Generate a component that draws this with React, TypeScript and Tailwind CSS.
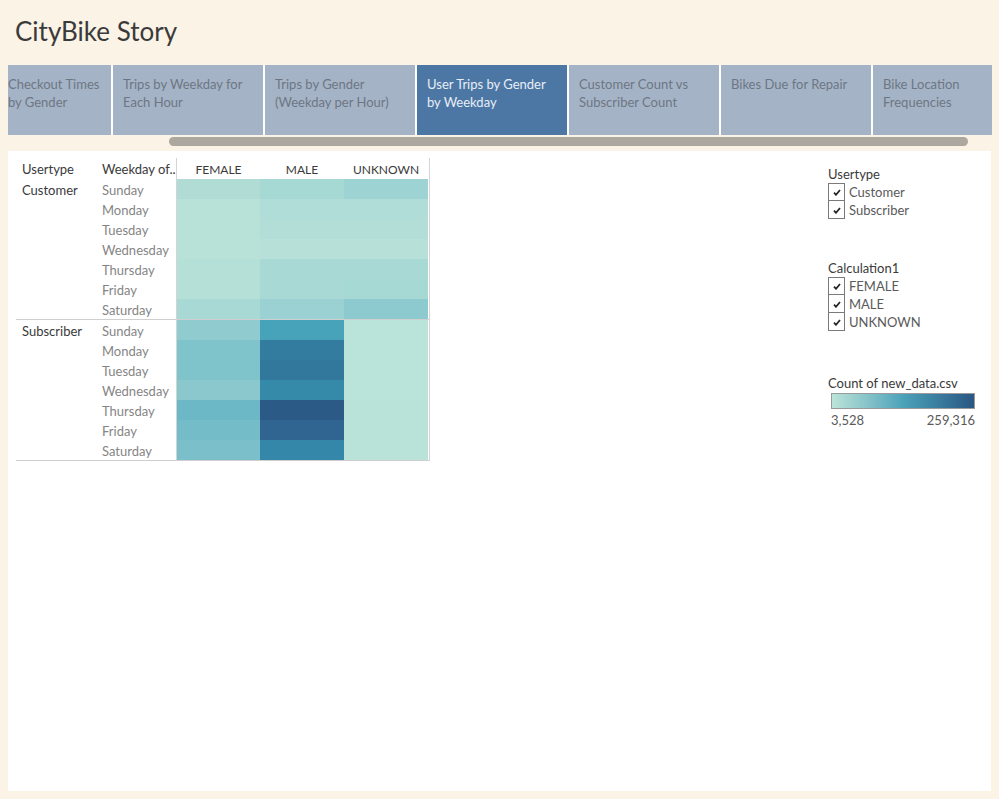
import React from "react";

const tabs = [
  { label: ["Checkout Times", "by Gender"], w: "w-[103px]", first: true },
  { label: ["Trips by Weekday for", "Each Hour"], w: "w-[150px]" },
  { label: ["Trips by Gender", "(Weekday per Hour)"], w: "w-[150px]" },
  { label: ["User Trips by Gender", "by Weekday"], w: "w-[150px]", active: true },
  { label: ["Customer Count vs", "Subscriber Count"], w: "w-[150px]" },
  { label: ["Bikes Due for Repair"], w: "w-[150px]" },
  { label: ["Bike Location", "Frequencies"], w: "w-[119px]" },
];

const days = ["Sunday", "Monday", "Tuesday", "Wednesday", "Thursday", "Friday", "Saturday"];

const groups = [
  {
    name: "Customer",
    cells: [
      ["#b1dcd6", "#a6d8d4", "#9dd3d2"],
      ["#b8e2d8", "#b0ddd7", "#b0ddd7"],
      ["#b8e2d8", "#b2ded7", "#b2ded7"],
      ["#b8e2d8", "#b6e0d8", "#b6e0d8"],
      ["#b5e0d8", "#a9d9d5", "#a9d9d5"],
      ["#b5e0d8", "#a9d9d5", "#a6d8d4"],
      ["#a8d9d5", "#9bd1d2", "#8ccacf"],
    ],
  },
  {
    name: "Subscriber",
    cells: [
      ["#8fcbcf", "#46a3ba", "#bae3d9"],
      ["#80c4cb", "#337c9f", "#bae3d9"],
      ["#80c4cb", "#32789c", "#bae3d9"],
      ["#8ac8ce", "#358aaa", "#bae3d9"],
      ["#6db8c6", "#2c5a87", "#b9e3d9"],
      ["#74bcc8", "#2f6590", "#b9e3d9"],
      ["#7abfc9", "#3587aa", "#b9e3d9"],
    ],
  },
];

function Check({ label, first }: { label: string; first?: boolean }) {
  return (
    <div className="flex items-center h-[18px]">
      <div
        className={`w-[17px] border border-[#7a7a7a] flex items-center justify-center bg-white ${first ? "h-[18px]" : "-mt-px h-[19px]"}`}
      >
        <svg width="8" height="7" viewBox="0 0 8 7" className="mt-[1px]">
          <path d="M1 3.6 L3 5.8 L7 1" stroke="#222" strokeWidth="1.7" fill="none" />
        </svg>
      </div>
      <span className="ml-[4px] pt-[2px] text-[13px] text-[#5a5a5a]">{label}</span>
    </div>
  );
}

export default function App() {
  return (
    <div className="w-[999px] h-[799px] bg-[#faf3e6] flex flex-col font-['Lato',sans-serif] overflow-hidden">
      <div className="h-[62px] pl-[15px] flex items-center text-[26px] text-[#3a3a3a]">CityBike Story</div>
      <div className="mt-[3px] ml-[8px] w-[984px] h-[70px] flex gap-[2px] bg-white">
        {tabs.map((t, i) => (
          <div
            key={i}
            className={`${t.w} h-full pt-[10px] ${t.first ? "pl-0" : "pl-[10px]"} text-[13px] leading-[18px] ${
              t.active ? "bg-[#4c77a5] text-[#e8eef5]" : "bg-[#a4b4c6] text-[#6e7684]"
            }`}
          >
            {t.label.map((l, j) => (
              <div key={j} className="whitespace-nowrap">
                {l}
              </div>
            ))}
          </div>
        ))}
      </div>
      <div className="mt-[2px] ml-[169px] w-[799px] h-[9px] rounded-full bg-[#aca89f]" />
      <div className="mt-[5px] ml-[8px] w-[983px] h-[640px] bg-white flex items-start">
        <div className="pl-[8px] pt-[7px] flex items-start text-[13px]">
          <div className="w-[160px]">
            <div className="h-[21px] pt-[3px] flex items-center text-[#3a3a3a]">
              <div className="w-[80px] pl-[6px]">Usertype</div>
              <div className="pl-[6px]">Weekday of..</div>
            </div>
            {groups.map((g) => (
              <div key={g.name} className="flex border-b border-[#cfcfcf]">
                <div className="w-[80px] pl-[6px] pt-[3px] h-[20px] flex items-center text-[#3a3a3a]">{g.name}</div>
                <div>
                  {days.map((d) => (
                    <div key={d} className="h-[20px] pl-[6px] pt-[3px] flex items-center text-[#858585]">
                      {d}
                    </div>
                  ))}
                </div>
              </div>
            ))}
          </div>
          <div className="w-[254px] border-l border-r border-[#d4d4d4]">
            <div className="h-[21px] pt-[3px] grid grid-cols-[83px_84px_84px] text-[12px] text-[#3a3a3a] items-center text-center">
              <div>FEMALE</div>
              <div>MALE</div>
              <div>UNKNOWN</div>
            </div>
            {groups.map((g) => (
              <div key={g.name} className="border-b border-[#cfcfcf]">
                {g.cells.map((row, r) => (
                  <div key={r} className="h-[20px] grid grid-cols-[83px_84px_84px]">
                    {row.map((c, k) => (
                      <div key={k} style={{ backgroundColor: c }} />
                    ))}
                  </div>
                ))}
              </div>
            ))}
          </div>
        </div>
        <div className="flex-1" />
        <div className="w-[147px] mr-[16px] pt-[14px] flex flex-col">
          <div className="h-[18px] pt-[2px] flex items-center text-[13px] text-[#3a3a3a]">Usertype</div>
          <Check label="Customer" first />
          <Check label="Subscriber" />
          <div className="h-[18px] pt-[2px] mt-[40px] flex items-center text-[13px] text-[#3a3a3a]">Calculation1</div>
          <Check label="FEMALE" first />
          <Check label="MALE" />
          <Check label="UNKNOWN" />
          <div className="h-[18px] pt-[2px] mt-[43px] flex items-center text-[13px] text-[#3a3a3a]">Count of new_data.csv</div>
          <div className="ml-[3px] mt-[1px] h-[16px] border border-[#9a9a9a] bg-linear-to-r from-[#bce4d8] via-[#4ba2b9] to-[#2a5783]" />
          <div className="ml-[3px] h-[22px] pt-[2px] flex items-center justify-between text-[13px] text-[#5a5a5a]">
            <span>3,528</span>
            <span>259,316</span>
          </div>
        </div>
      </div>
    </div>
  );
}
